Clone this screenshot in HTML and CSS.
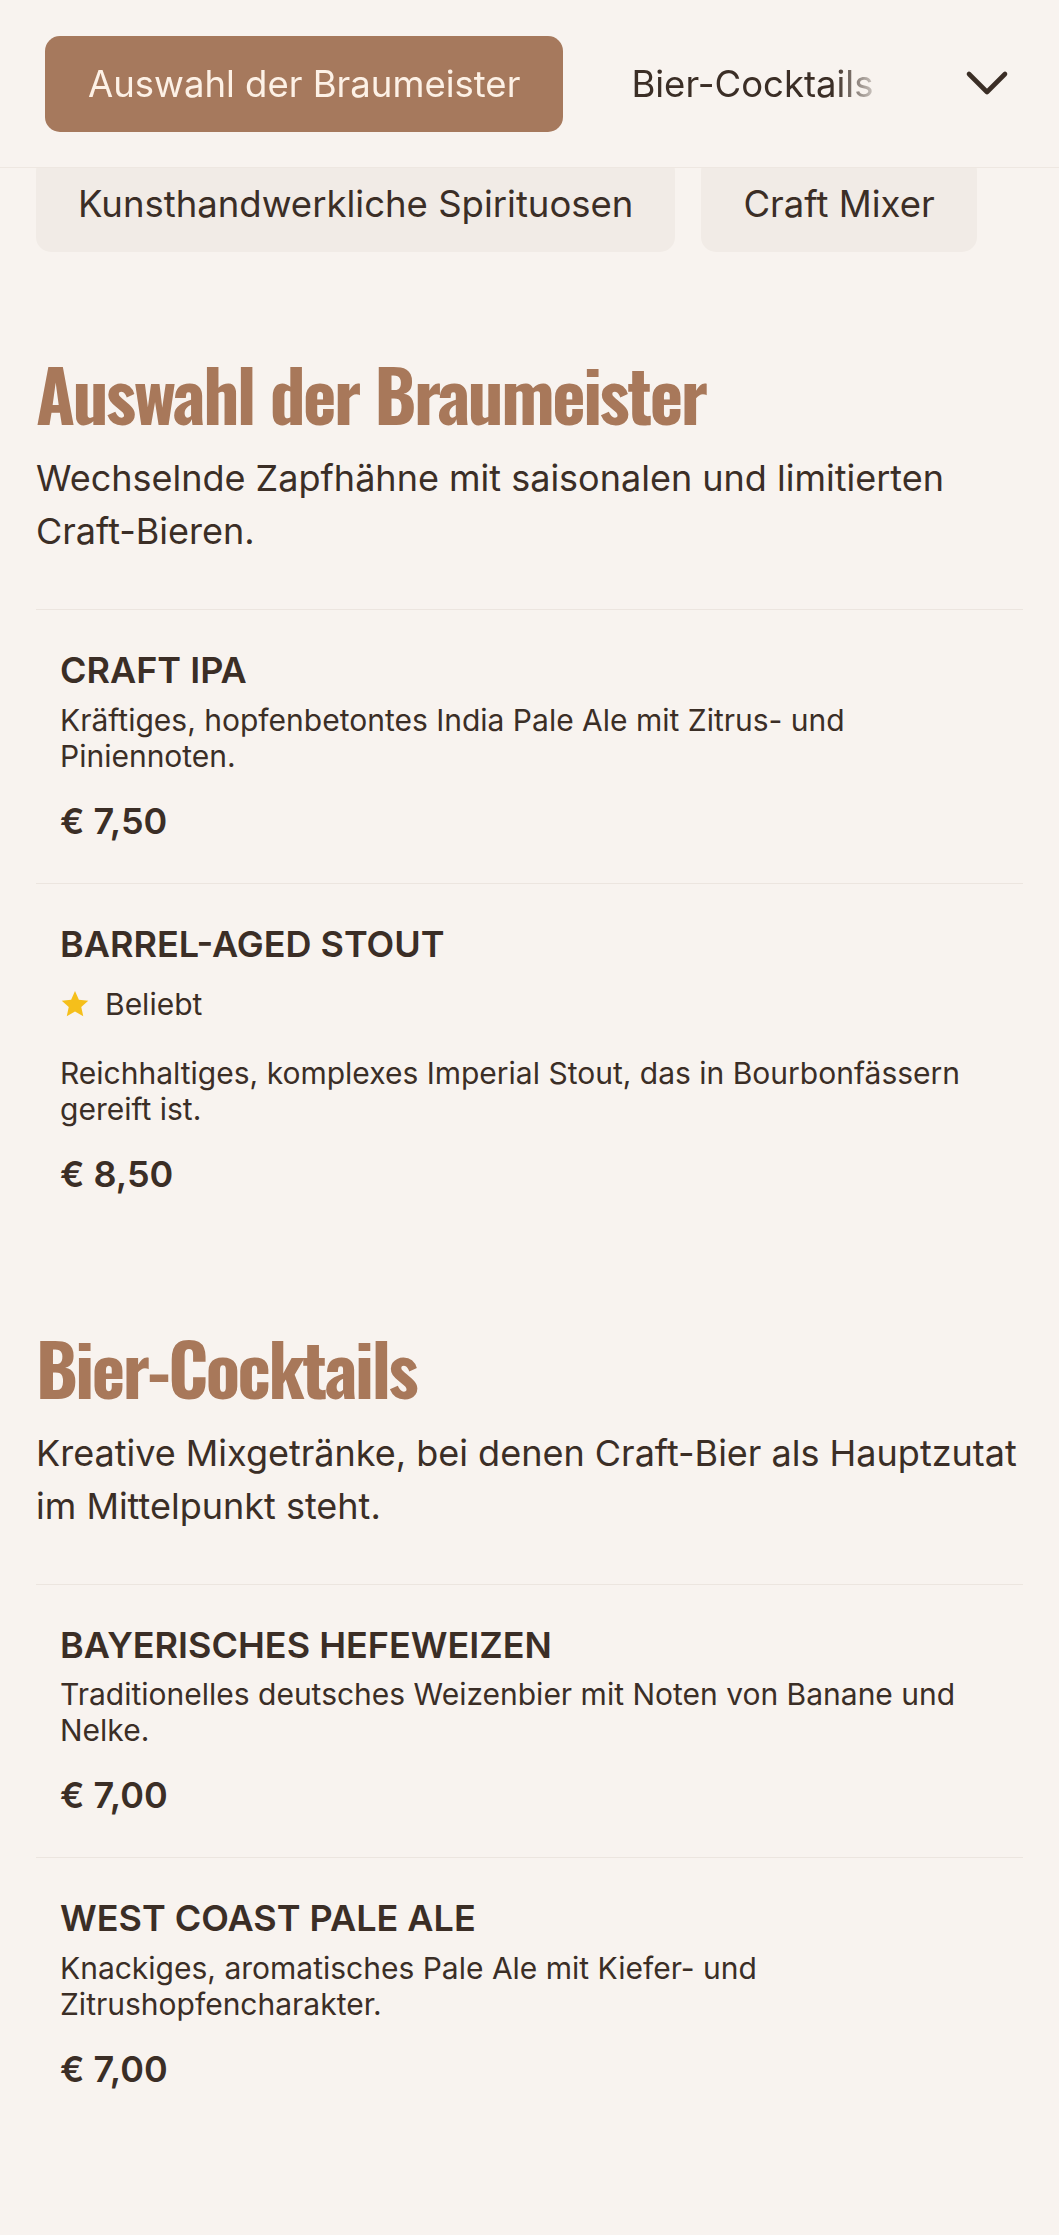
FILE: index.html
```html
<!DOCTYPE html>
<html lang="de">
<head>
  <meta charset="UTF-8">
  <title>Getränkekarte</title>
  <link rel="stylesheet" href="styles.css">
</head>
<body>
  <!-- Category tabs -->
  <header class="tabs-bar">
    <nav class="tabs-scroll">
      <a class="tab active" href="#braumeister">Auswahl der Braumeister</a>
      <a class="tab" href="#cocktails">Bier-Cocktails</a>
    </nav>
    <button class="tabs-toggle" aria-label="Alle Kategorien">
      <svg width="44" height="28" viewBox="0 0 44 28"><polyline points="4,4 22,22 40,4" fill="none" stroke="#3b2e26" stroke-width="4.6" stroke-linecap="round" stroke-linejoin="round"/></svg>
    </button>
  </header>
  <div class="tabs-more">
    <a class="tab" href="#spirituosen">Kunsthandwerkliche Spirituosen</a>
    <a class="tab" href="#mixer">Craft Mixer</a>
  </div>

  <main class="menu">
    <!-- Section: Auswahl der Braumeister -->
    <section class="menu-section" id="braumeister">
      <h2 class="section-title">Auswahl der Braumeister</h2>
      <p class="section-desc">Wechselnde Zapfhähne mit saisonalen und limitierten Craft-Bieren.</p>
      <div class="item">
        <h3 class="item-name">CRAFT IPA</h3>
        <p class="item-desc">Kräftiges, hopfenbetontes India Pale Ale mit Zitrus- und Piniennoten.</p>
        <p class="item-price">€ 7,50</p>
      </div>
      <div class="item">
        <h3 class="item-name">BARREL-AGED STOUT</h3>
        <div class="badges">
          <svg class="star" width="30" height="30" viewBox="0 0 24 24"><path d="M12 1.6l3.1 6.9 7.5.8-5.6 5.1 1.6 7.4L12 18l-6.6 3.8L7 14.4 1.4 9.3l7.5-.8z" fill="#f5bf1b"/></svg>
          <span>Beliebt</span>
        </div>
        <p class="item-desc">Reichhaltiges, komplexes Imperial Stout, das in Bourbonfässern gereift ist.</p>
        <p class="item-price">€ 8,50</p>
      </div>
    </section>

    <!-- Section: Bier-Cocktails -->
    <section class="menu-section" id="cocktails">
      <h2 class="section-title">Bier-Cocktails</h2>
      <p class="section-desc">Kreative Mixgetränke, bei denen Craft-Bier als Hauptzutat im Mittelpunkt steht.</p>
      <div class="item">
        <h3 class="item-name">BAYERISCHES HEFEWEIZEN</h3>
        <p class="item-desc">Traditionelles deutsches Weizenbier mit Noten von Banane und Nelke.</p>
        <p class="item-price">€ 7,00</p>
      </div>
      <div class="item">
        <h3 class="item-name">WEST COAST PALE ALE</h3>
        <p class="item-desc">Knackiges, aromatisches Pale Ale mit Kiefer- und Zitrushopfencharakter.</p>
        <p class="item-price">€ 7,00</p>
      </div>
    </section>
  </main>
</body>
</html>
```

FILE: styles.css
```css
/* Global */
body {
  margin: 0;
  background: #f8f3ef;
  color: #3b2e26;
  font-family: Inter, "Noto Sans", sans-serif;
}
/* Category tabs bar */
.tabs-bar {
  position: relative;
  z-index: 2;
  display: flex;
  align-items: center;
  gap: 72px;
  padding: 36px 42px 35px 45px;
  background: #f8f3ef;
  border-bottom: 1px solid #eee7e1;
}
.tabs-scroll {
  flex: 1;
  display: flex;
  gap: 25px;
  overflow: hidden;
  -webkit-mask-image: linear-gradient(to right, #000 calc(100% - 50px), transparent);
  mask-image: linear-gradient(to right, #000 calc(100% - 50px), transparent);
}
.tab {
  flex: none;
  display: flex;
  align-items: center;
  height: 96px;
  padding: 0 43px;
  border-radius: 15px;
  font-size: 36.5px;
  color: #3b2e26;
  text-decoration: none;
  white-space: nowrap;
}
.tab.active {
  background: #a6795d;
  color: #fdf1e6;
}
.tabs-toggle {
  width: 60px;
  height: 60px;
  padding: 0;
  border: none;
  background: none;
  display: flex;
  align-items: center;
  justify-content: center;
  cursor: pointer;
}
/* Remaining categories, tucked under the bar */
.tabs-more {
  display: flex;
  gap: 26px;
  padding: 0 36px;
  margin: -12px 0 14px;
}
.tabs-more .tab {
  padding: 0 42px;
  background: #f1ebe6;
}
/* Menu sections */
.menu {
  padding: 0 36px 100px;
}
.menu-section {
  padding: 85px 0 5px;
}
.section-title {
  margin: 0 0 16px;
  font-family: Oswald, "Liberation Sans Narrow", "DejaVu Sans Condensed", sans-serif;
  font-size: 71px;
  font-weight: 700;
  letter-spacing: -2.4px;
  line-height: 1.2;
  color: #a8785a;
}
.section-desc {
  margin: 0 0 51px;
  font-size: 36px;
  line-height: 53px;
}
/* Menu items */
.item {
  border-top: 1px solid #ece5df;
  padding: 37px 24px 38px;
}
.item-name {
  margin: 0 0 8px;
  font-size: 36px;
  font-weight: 600;
  line-height: 1.3;
}
.item-desc {
  margin: 0;
  max-width: 904px;
  font-size: 30px;
  line-height: 36px;
}
.item-price {
  margin: 24px 0 0;
  font-size: 36px;
  font-weight: 600;
  line-height: 1.3;
}
.badges {
  display: flex;
  align-items: center;
  gap: 15px;
  height: 40px;
  margin: 16px 0 31px;
  font-size: 30px;
}
```
